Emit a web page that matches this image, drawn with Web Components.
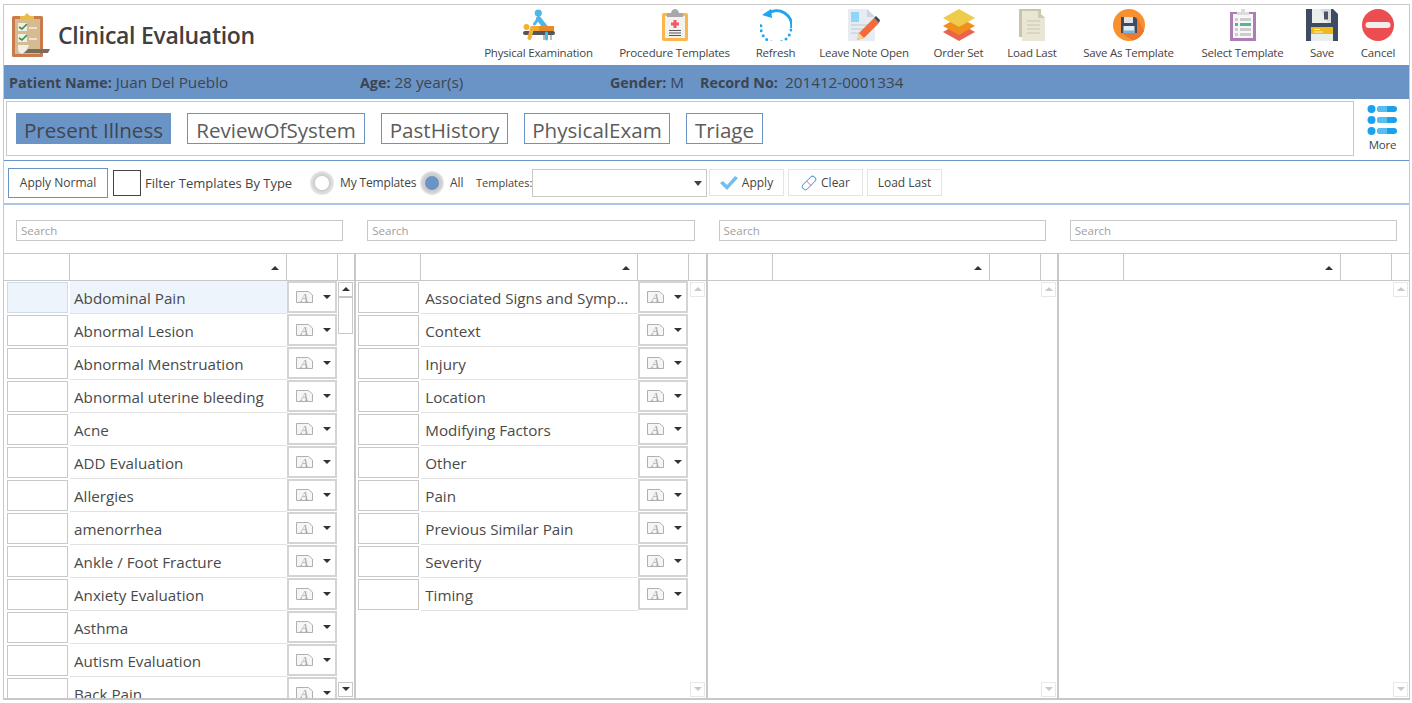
<!doctype html>
<html lang="en">
<head>
<meta charset="utf-8">
<title>Clinical Evaluation</title>
<style>
  html,body{margin:0;height:100%;background:#fff;overflow:hidden}
  body{font-family:"Open Sans","Noto Sans","Liberation Sans",sans-serif;color:#444}
</style>
</head>
<body>
<eval-app>
  <eval-header slot="header" title-text="Clinical Evaluation">
    <svg slot="logo" width="38" height="46" viewBox="0 0 38 46">
      <rect x="0" y="4" width="31" height="41" rx="1.5" fill="#c97b4c"/>
      <rect x="3" y="7" width="25" height="35" fill="#d7bb90"/>
      <path d="M8 7V4h4l3-3 3 3h4v3z" fill="#ecbb45"/>
      <rect x="6" y="11" width="9" height="8" fill="#f1eee8"/><rect x="6" y="22" width="9" height="8" fill="#f1eee8"/>
      <path d="M7 15l3 2 5-5M7 26l3 2 5-5" fill="none" stroke="#3d8f3f" stroke-width="1.6"/>
      <path d="M17 16h8M17 27h8" stroke="#f1eee8" stroke-width="1.5"/>
      <path d="M6 33h11l-2 5-5 4q-4-1-4-5z" fill="#f1eee8"/>
      <path d="M16 37h22l-2 4H12z" fill="#7c6b5a"/>
    </svg>
    <tool-button style="width:109px">Physical Examination
      <svg slot="icon" width="32" height="32" viewBox="0 0 32 32">
        <circle cx="15.300" cy="4" r="3.600" fill="#4db8e8"/>
        <path d="M15.500 9.500L23 19" fill="none" stroke="#4db8e8" stroke-width="5" stroke-linecap="round"/>
        <path d="M15.300 9.500L11.500 15" fill="none" stroke="#4db8e8" stroke-width="3" stroke-linecap="round"/>
        <path d="M20 26h2v5h-2zM27 26h2v5h-2z" fill="#b9bdc0"/>
        <rect x="0" y="22" width="32" height="4" rx="2" fill="#55565a"/>
        <circle cx="3.500" cy="18" r="3" fill="#f2b134"/>
        <rect x="8" y="17" width="12" height="5" fill="#f5aa2f"/><path d="M16 17h15v5H16z" fill="#e98b2c"/>
        <path d="M9 19l-2.500 10" stroke="#f2b134" stroke-width="4" stroke-linecap="round"/>
        <path d="M23.500 24v6" stroke="#4db8e8" stroke-width="3" stroke-linecap="round"/>
      </svg>
    </tool-button>
    <tool-button style="width:111px;margin-left:26px">Procedure Templates
      <svg slot="icon" width="26" height="32" viewBox="0 0 26 32">
        <rect x="0" y="4" width="26" height="28" rx="2" fill="#fab64d"/>
        <rect x="3" y="7" width="20" height="22" fill="#f2f2f0"/>
        <path d="M5 8V4h4q1-4 4-4t4 4h4v4z" fill="#a8a8a8"/>
        <path d="M11.500 11h3v2.500H17v3h-2.500V19h-3v-2.500H9v-3h2.500z" fill="#f0596b"/>
        <path d="M7 21.500h12M7 24h12M7 26.500h12" stroke="#555" stroke-width="1.100"/>
      </svg>
    </tool-button>
    <tool-button style="width:39px;margin-left:26px">Refresh
      <svg slot="icon" width="32" height="32" viewBox="0 0 32 32">
        <path d="M8 4.500A15 15 0 0 1 31.500 19" fill="none" stroke="#1da6f0" stroke-width="3"/>
        <path d="M2 6l9-6 1 9z" fill="#1da6f0"/>
        <path d="M31 21A15 15 0 0 1 1 16" fill="none" stroke="#1da6f0" stroke-width="3" stroke-linecap="round" stroke-dasharray="0 5.200"/>
      </svg>
    </tool-button>
    <tool-button style="width:92px;margin-left:23px">Leave Note Open
      <svg slot="icon" width="32" height="32" viewBox="0 0 32 32">
        <path d="M0 0h19l8 8v24H0z" fill="#e7ecf3"/><path d="M19 0l8 8h-8z" fill="#cfd5de"/>
        <rect x="3" y="3" width="8" height="10" fill="#8fd5fa"/>
        <path d="M3 16h17M3 20h14M3 24h10" stroke="#cdd3dd" stroke-width="1.500"/>
        <path d="M9 31l2-7 15-15 5 5-15 15z" fill="#f26b3a"/>
        <path d="M26 9l2-2 4 4-1 3z" fill="#3f4a58"/>
        <path d="M9 31l2-7 5 5z" fill="#f5d29a"/>
      </svg>
    </tool-button>
    <tool-button style="width:51px;margin-left:23px">Order Set
      <svg slot="icon" width="32" height="32" viewBox="0 0 32 32">
        <path d="M16 14l16 9-16 9-16-9z" fill="#e9644a"/>
        <path d="M16 8l16 9-16 9-16-9z" fill="#f28e1e"/>
        <path d="M16 0l16 9-16 9-16-9z" fill="#eecb4b"/>
      </svg>
    </tool-button>
    <tool-button style="width:50px;margin-left:23px">Load Last
      <svg slot="icon" width="26" height="32" viewBox="0 0 26 32">
        <path d="M0 0h22v28H0z" fill="#c9c4ab"/>
        <path d="M3 2h16l7 7v23H3z" fill="#e9e6d5"/><path d="M19 2l7 7h-7z" fill="#cfcab2"/>
        <path d="M8 12h13M8 16h13M8 20h13M8 24h13" stroke="#d4d0b9" stroke-width="1.300"/>
      </svg>
    </tool-button>
    <tool-button style="width:93px;margin-left:25px">Save As Template
      <svg slot="icon" width="32" height="32" viewBox="0 0 32 32">
        <circle cx="16" cy="16" r="16" fill="#f8912d"/>
        <path d="M24 8l7 14A16 16 0 0 1 20 31.500L8 24z" fill="#ec7a2e"/>
        <path d="M8 8h14l2 2v14H8z" fill="#3f4a63"/>
        <rect x="11" y="8" width="9" height="6" fill="#dfe3e6"/>
        <rect x="10.500" y="17" width="11" height="7" fill="#e9edf0"/>
        <rect x="10.500" y="21.500" width="11" height="2.500" fill="#6fb7e4"/>
      </svg>
    </tool-button>
    <tool-button style="width:83px;margin-left:26px">Select Template
      <svg slot="icon" width="26" height="32" viewBox="0 0 26 32">
        <rect x="0" y="3" width="26" height="29" fill="#ab7fb1"/>
        <rect x="3" y="5" width="20" height="24" fill="#f7f7f7"/>
        <path d="M7 6V3h4V0h4v3h4v3z" fill="#dcdcdc"/>
        <path d="M5 9h3v3H5zM10 9h11v3H10zM5 19h3v3H5zM10 19h11v3H10zM5 24h3v3H5zM10 24h11v3H10z" fill="#cdcdcd"/>
        <path d="M5 14h3v3H5zM10 14h11v3H10z" fill="#4fb79d"/>
      </svg>
    </tool-button>
    <tool-button style="width:24px;margin-left:26px">Save
      <svg slot="icon" width="32" height="32" viewBox="0 0 32 32" style="margin:0 -4px">
        <path d="M0 0h27l5 5v27H0z" fill="#3f4a63"/>
        <path d="M6 0h19v14H6z" fill="#d9dcdc"/><path d="M6 0h8l8 14H6z" fill="#eceeee"/>
        <rect x="18" y="2.500" width="4" height="8" fill="#4c5568"/>
        <rect x="5" y="18" width="22" height="14" fill="#e9edec"/>
        <rect x="5" y="18" width="22" height="7" fill="#eeb91d"/>
        <path d="M8 20.500h6M8 23h9" stroke="#fff3cf" stroke-width="1"/>
      </svg>
    </tool-button>
    <tool-button style="width:36px;margin-left:26px">Cancel
      <svg slot="icon" width="32" height="32" viewBox="0 0 32 32">
        <circle cx="16" cy="16" r="16" fill="#eb4d50"/>
        <rect x="3.500" y="13" width="25" height="6" rx="3" fill="#f2eeee"/>
      </svg>
    </tool-button>
  </eval-header>

  <patient-bar slot="patient">
    <patient-field style="width:351px" label="Patient Name:">Juan Del Pueblo</patient-field>
    <patient-field style="width:250px" label="Age:">28 year(s)</patient-field>
    <patient-field style="width:90px" label="Gender:">M</patient-field>
    <patient-field style="--gap:3px" label="Record No:">201412-0001334</patient-field>
  </patient-bar>

  <tab-strip slot="tabs">
    <tab-item style="width:155px" active>Present Illness</tab-item>
    <tab-item style="width:178px">ReviewOfSystem</tab-item>
    <tab-item style="width:127px">PastHistory</tab-item>
    <tab-item style="width:146px">PhysicalExam</tab-item>
    <tab-item style="width:77px">Triage</tab-item>
  </tab-strip>

  <filter-bar slot="filters"></filter-bar>

  <list-panel slot="lists" scrolled>
    <list-row selected>Abdominal Pain</list-row>
    <list-row>Abnormal Lesion</list-row>
    <list-row>Abnormal Menstruation</list-row>
    <list-row>Abnormal uterine bleeding</list-row>
    <list-row>Acne</list-row>
    <list-row>ADD Evaluation</list-row>
    <list-row>Allergies</list-row>
    <list-row>amenorrhea</list-row>
    <list-row>Ankle / Foot Fracture</list-row>
    <list-row>Anxiety Evaluation</list-row>
    <list-row>Asthma</list-row>
    <list-row>Autism Evaluation</list-row>
    <list-row>Back Pain</list-row>
  </list-panel>
  <list-panel slot="lists">
    <list-row>Associated Signs and Symp...</list-row>
    <list-row>Context</list-row>
    <list-row>Injury</list-row>
    <list-row>Location</list-row>
    <list-row>Modifying Factors</list-row>
    <list-row>Other</list-row>
    <list-row>Pain</list-row>
    <list-row>Previous Similar Pain</list-row>
    <list-row>Severity</list-row>
    <list-row>Timing</list-row>
  </list-panel>
  <list-panel slot="lists"></list-panel>
  <list-panel slot="lists" last></list-panel>
</eval-app>

<script>
const LINE = "#c8c8c8", BLUE = "#6a93c6";

// <eval-app> — outer frame, stacks the bars and the four list columns
class EvalApp extends HTMLElement {
  connectedCallback() {
    this.attachShadow({ mode: "open" }).innerHTML = `
      <style>
        :host{display:flex;flex-direction:column;box-sizing:border-box;height:696px;margin:4px 2px 0 3px;
          border:1px solid ${LINE};border-bottom:0;background:#fff}
        .lists{flex:1;min-height:0;display:grid;grid-template-columns:repeat(4,1fr);border-bottom:2px solid ${LINE}}
      </style>
      <slot name="header"></slot>
      <slot name="patient"></slot>
      <slot name="tabs"></slot>
      <slot name="filters"></slot>
      <div class="lists"><slot name="lists"></slot></div>`;
  }
}

// <eval-header> — logo, page title and the row of tool buttons
class EvalHeader extends HTMLElement {
  connectedCallback() {
    this.attachShadow({ mode: "open" }).innerHTML = `
      <style>
        :host{display:flex;height:60px;box-sizing:border-box;padding:0 13px 0 8px;flex:none}
        .logo{padding-top:7px;margin-right:8px;height:46px}
        h1{margin:0;padding-top:13px;font-size:23px;letter-spacing:-.3px;line-height:34px;font-weight:600;color:#404040;white-space:nowrap}
        .tools{margin-left:auto;display:flex}
      </style>
      <div class="logo"><slot name="logo"></slot></div>
      <h1>${this.getAttribute("title-text")}</h1>
      <div class="tools"><slot></slot></div>`;
  }
}

// <tool-button> — icon over a small caption
class ToolButton extends HTMLElement {
  connectedCallback() {
    this.attachShadow({ mode: "open" }).innerHTML = `
      <style>
        :host{display:flex;flex-direction:column;align-items:center;padding-top:4px;font-size:11.500px;letter-spacing:-.2px;color:#444;white-space:nowrap}
        .i{height:32px;display:flex;justify-content:center}
        .t{margin-top:4px;line-height:16px}
      </style>
      <div class="i"><slot name="icon"></slot></div>
      <div class="t"><slot></slot></div>`;
  }
}

// <patient-bar> — blue strip with the patient's details
class PatientBar extends HTMLElement {
  connectedCallback() {
    this.attachShadow({ mode: "open" }).innerHTML = `
      <style>
        :host{display:flex;align-items:center;flex:none;height:34px;box-sizing:border-box;padding:0 0 1px 5px;
          background:${BLUE};color:#3d4550;font-size:15.300px;white-space:nowrap}
      </style>
      <slot></slot>`;
  }
}

class PatientField extends HTMLElement {
  connectedCallback() {
    this.attachShadow({ mode: "open" }).innerHTML = `
      <style>
        :host{display:block;flex:none}
        b{font-weight:700;font-size:14.300px;margin-right:var(--gap,0)}
      </style>
      <b>${this.getAttribute("label")}</b> <slot></slot>`;
  }
}

// <tab-strip> — bordered box of section tabs, with the More button beside it
class TabStrip extends HTMLElement {
  connectedCallback() {
    this.attachShadow({ mode: "open" }).innerHTML = `
      <style>
        :host{display:flex;flex:none;height:62px;box-sizing:border-box;padding:2px 0 4px 2px;border-bottom:1px solid ${BLUE}}
        .box{width:1348px;box-sizing:border-box;border:1px solid ${LINE};display:flex;gap:16px;padding:11px 9px 0}
        .more{flex:1;display:flex;flex-direction:column;align-items:center;padding:4px 0 0 2px;font-size:11.500px;letter-spacing:-.2px;line-height:16px;color:#444}
        svg{display:block;margin-bottom:2px}
      </style>
      <div class="box"><slot></slot></div>
      <div class="more">
        <svg width="31" height="30" viewBox="0 0 31 30">
          <circle cx="4.500" cy="4" r="4" fill="#1da1ea"/><circle cx="4.500" cy="15" r="4" fill="#1da1ea"/><circle cx="4.500" cy="26" r="4" fill="#1da1ea"/>
          <g fill="#1da1ea"><rect x="10" y="1" width="20" height="6" rx="3"/><rect x="10" y="12" width="20" height="6" rx="3"/><rect x="10" y="23" width="20" height="6" rx="3"/></g>
          <g fill="#57bfee"><path d="M13 1h7v6h-7a3 3 0 0 1 0-6zM13 12h7v6h-7a3 3 0 0 1 0-6zM13 23h7v6h-7a3 3 0 0 1 0-6z"/></g>
        </svg>
        More
      </div>`;
  }
}

class TabItem extends HTMLElement {
  connectedCallback() {
    const active = this.hasAttribute("active");
    this.attachShadow({ mode: "open" }).innerHTML = `
      <style>
        :host{display:block;box-sizing:border-box;height:31px;text-align:center;line-height:31px;font-size:20.600px;white-space:nowrap;
          border:1px solid ${BLUE};color:${active ? "#3f4650" : "#5c5c5c"};background:${active ? BLUE : "#fff"}}
        span{position:relative;top:1px}
      </style>
      <span><slot></slot></span>`;
  }
}

// <filter-bar> — template filter controls
class FilterBar extends HTMLElement {
  connectedCallback() {
    this.attachShadow({ mode: "open" }).innerHTML = `
      <style>
        :host{display:flex;align-items:center;flex:none;height:44px;box-sizing:border-box;padding:1px 0 0 4px;
          border-bottom:2px solid #a9c6e6;font-size:12px;color:#444;white-space:nowrap}
        .normal{box-sizing:border-box;width:100px;height:30px;border:1px solid ${BLUE};display:grid;place-items:center}
        .check{box-sizing:border-box;width:28px;height:26px;border:1px solid #444;margin:0 4px 0 5px}
        .type{width:165px;font-size:13px;letter-spacing:-.02px}
        .radio{width:24px;height:24px;border-radius:50%;background:radial-gradient(circle,#fff 0 6.500px,#cdcdcd 7.500px,#e8e8e8 12px);
          display:grid;place-items:center;margin-right:6px}
        .radio.on{background:radial-gradient(circle,#cdcdcd 0 9px,#e8e8e8 12px)}
        .radio.on i{width:14px;height:14px;border-radius:50%;background:${BLUE}}
        .my{width:80px;letter-spacing:-.15px}
        .all{width:26px}
        .tpl{font-size:11px;width:56px}
        .select{box-sizing:border-box;width:175px;height:28px;border:1px solid ${LINE};position:relative;margin-right:2px}
        .select::after{content:"";position:absolute;right:4px;top:11px;border:4px solid transparent;border-top:5px solid #444;border-bottom:0}
        .btn{box-sizing:border-box;width:75px;height:27px;border:1px solid #e4e4e4;display:flex;align-items:center;justify-content:center;gap:4px;margin-right:4px}
      </style>
      <div class="normal">Apply Normal</div>
      <div class="check"></div>
      <div class="type">Filter Templates By Type</div>
      <div class="radio"></div><div class="my">My Templates</div>
      <div class="radio on"><i></i></div><div class="all">All</div>
      <div class="tpl">Templates:</div>
      <div class="select"></div>
      <div class="btn">
        <svg width="18" height="14" viewBox="0 0 18 14"><path d="M0 7l3-2 4 4 8-9 3 2-11 12z" fill="#6fc0f0"/></svg>Apply
      </div>
      <div class="btn">
        <svg width="16" height="16" viewBox="0 0 16 16"><rect x="5" y="0" width="6" height="16" rx="2.500" transform="rotate(45 8 8)" fill="#fff" stroke="#4f9fd8"/><path d="M5.500 6l4.500 4.500" stroke="#ef6a7a"/></svg>Clear
      </div>
      <div class="btn">Load Last</div>`;
  }
}

// <list-panel> — search box, grid header, rows and a scrollbar column
class ListPanel extends HTMLElement {
  connectedCallback() {
    const on = this.hasAttribute("scrolled");
    const arrow = on ? "#333" : "#c9c9c9";
    const edge = on ? LINE : "#e8e8e8";
    this.attachShadow({ mode: "open" }).innerHTML = `
      <style>
        :host{display:flex;flex-direction:column;min-width:0;min-height:0}
        .search{padding:15px 12px 12px;flex:none}
        .search div{box-sizing:border-box;height:21px;border:1px solid ${LINE};padding-left:4px;font-size:11.500px;line-height:19px;color:#a0a0a0}
        .grid{flex:1;min-height:0;display:flex;flex-direction:column;border-right:2px solid ${LINE};margin-right:-1px}
        :host([last]) .grid{border-right:0;margin-right:0}
        .head{flex:none;height:28px;box-sizing:border-box;display:grid;grid-template-columns:66px 217px 51px 1fr;border-top:1px solid ${LINE};border-bottom:1px solid ${LINE}}
        .head div{border-right:1px solid ${LINE};position:relative}
        .head div:last-child{border-right:0}
        .sort::after{content:"";position:absolute;right:7px;top:12px;border:4px solid transparent;border-bottom:4px solid #333;border-top:0}
        .body{flex:1;min-height:0;display:grid;grid-template-columns:1fr 17px;overflow:hidden}
        .rows{min-width:0;overflow:hidden}
        .bar{position:relative}
        .b{box-sizing:border-box;height:15px;border:1px solid ${edge};position:absolute;left:1px;width:15px}
        .b::after{content:"";position:absolute;left:3px;top:4px;border:4px solid transparent;border-top:0;border-bottom:4px solid ${arrow}}
        .up{top:1px}
        .down{bottom:1px}
        .down::after{border-bottom:0;border-top:4px solid ${arrow}}
        .thumb{position:absolute;left:1px;top:16px;width:15px;height:37px;box-sizing:border-box;border:1px solid ${LINE};display:${on ? "block" : "none"}}
      </style>
      <div class="search"><div>Search</div></div>
      <div class="grid">
        <div class="head"><div></div><div class="sort"></div><div></div><div></div></div>
        <div class="body">
          <div class="rows"><slot></slot></div>
          <div class="bar"><div class="b up"></div><div class="thumb"></div><div class="b down"></div></div>
        </div>
      </div>`;
  }
}

// <list-row> — empty box, name, and the note-type dropdown
class ListRow extends HTMLElement {
  connectedCallback() {
    this.attachShadow({ mode: "open" }).innerHTML = `
      <style>
        :host{display:grid;grid-template-columns:66px 217px 1fr;height:33px;font-size:15.200px;color:#4a4a4a}
        :host([selected]) .tint{background:#edf4fb}
        .box{box-sizing:border-box;margin:1px 2px 1px 3px;height:31px;border:1px solid ${LINE}}
        :host([selected]) .box{border-color:#cfdbe6;background:#edf4fb}
        .name{box-sizing:border-box;height:33px;border-bottom:1px solid #e2e2e2;padding-left:4px;line-height:35px;white-space:nowrap;overflow:hidden}
        .act{box-sizing:border-box;height:32px;width:50px;border:2px solid #d4d4d4;display:flex;align-items:center;padding-left:7px}
        .act i{margin-left:10px;border:4px solid transparent;border-top:4px solid #333;border-bottom:0}
        svg{display:block}
        text{font:italic 12px "Liberation Serif",serif;fill:#a0a0a0}
      </style>
      <div class="box"></div>
      <div class="name tint"><slot></slot></div>
      <div class="act">
        <svg width="17" height="12" viewBox="0 0 17 12"><path d="M.5.500h12l4 3.500v7.500H.5z" fill="#f6f6f6" stroke="#b0b0b0"/><text x="4.500" y="10.500">A</text></svg>
        <i></i>
      </div>`;
  }
}

customElements.define("eval-app", EvalApp);
customElements.define("eval-header", EvalHeader);
customElements.define("tool-button", ToolButton);
customElements.define("patient-bar", PatientBar);
customElements.define("patient-field", PatientField);
customElements.define("tab-strip", TabStrip);
customElements.define("tab-item", TabItem);
customElements.define("filter-bar", FilterBar);
customElements.define("list-panel", ListPanel);
customElements.define("list-row", ListRow);
</script>
</body>
</html>
